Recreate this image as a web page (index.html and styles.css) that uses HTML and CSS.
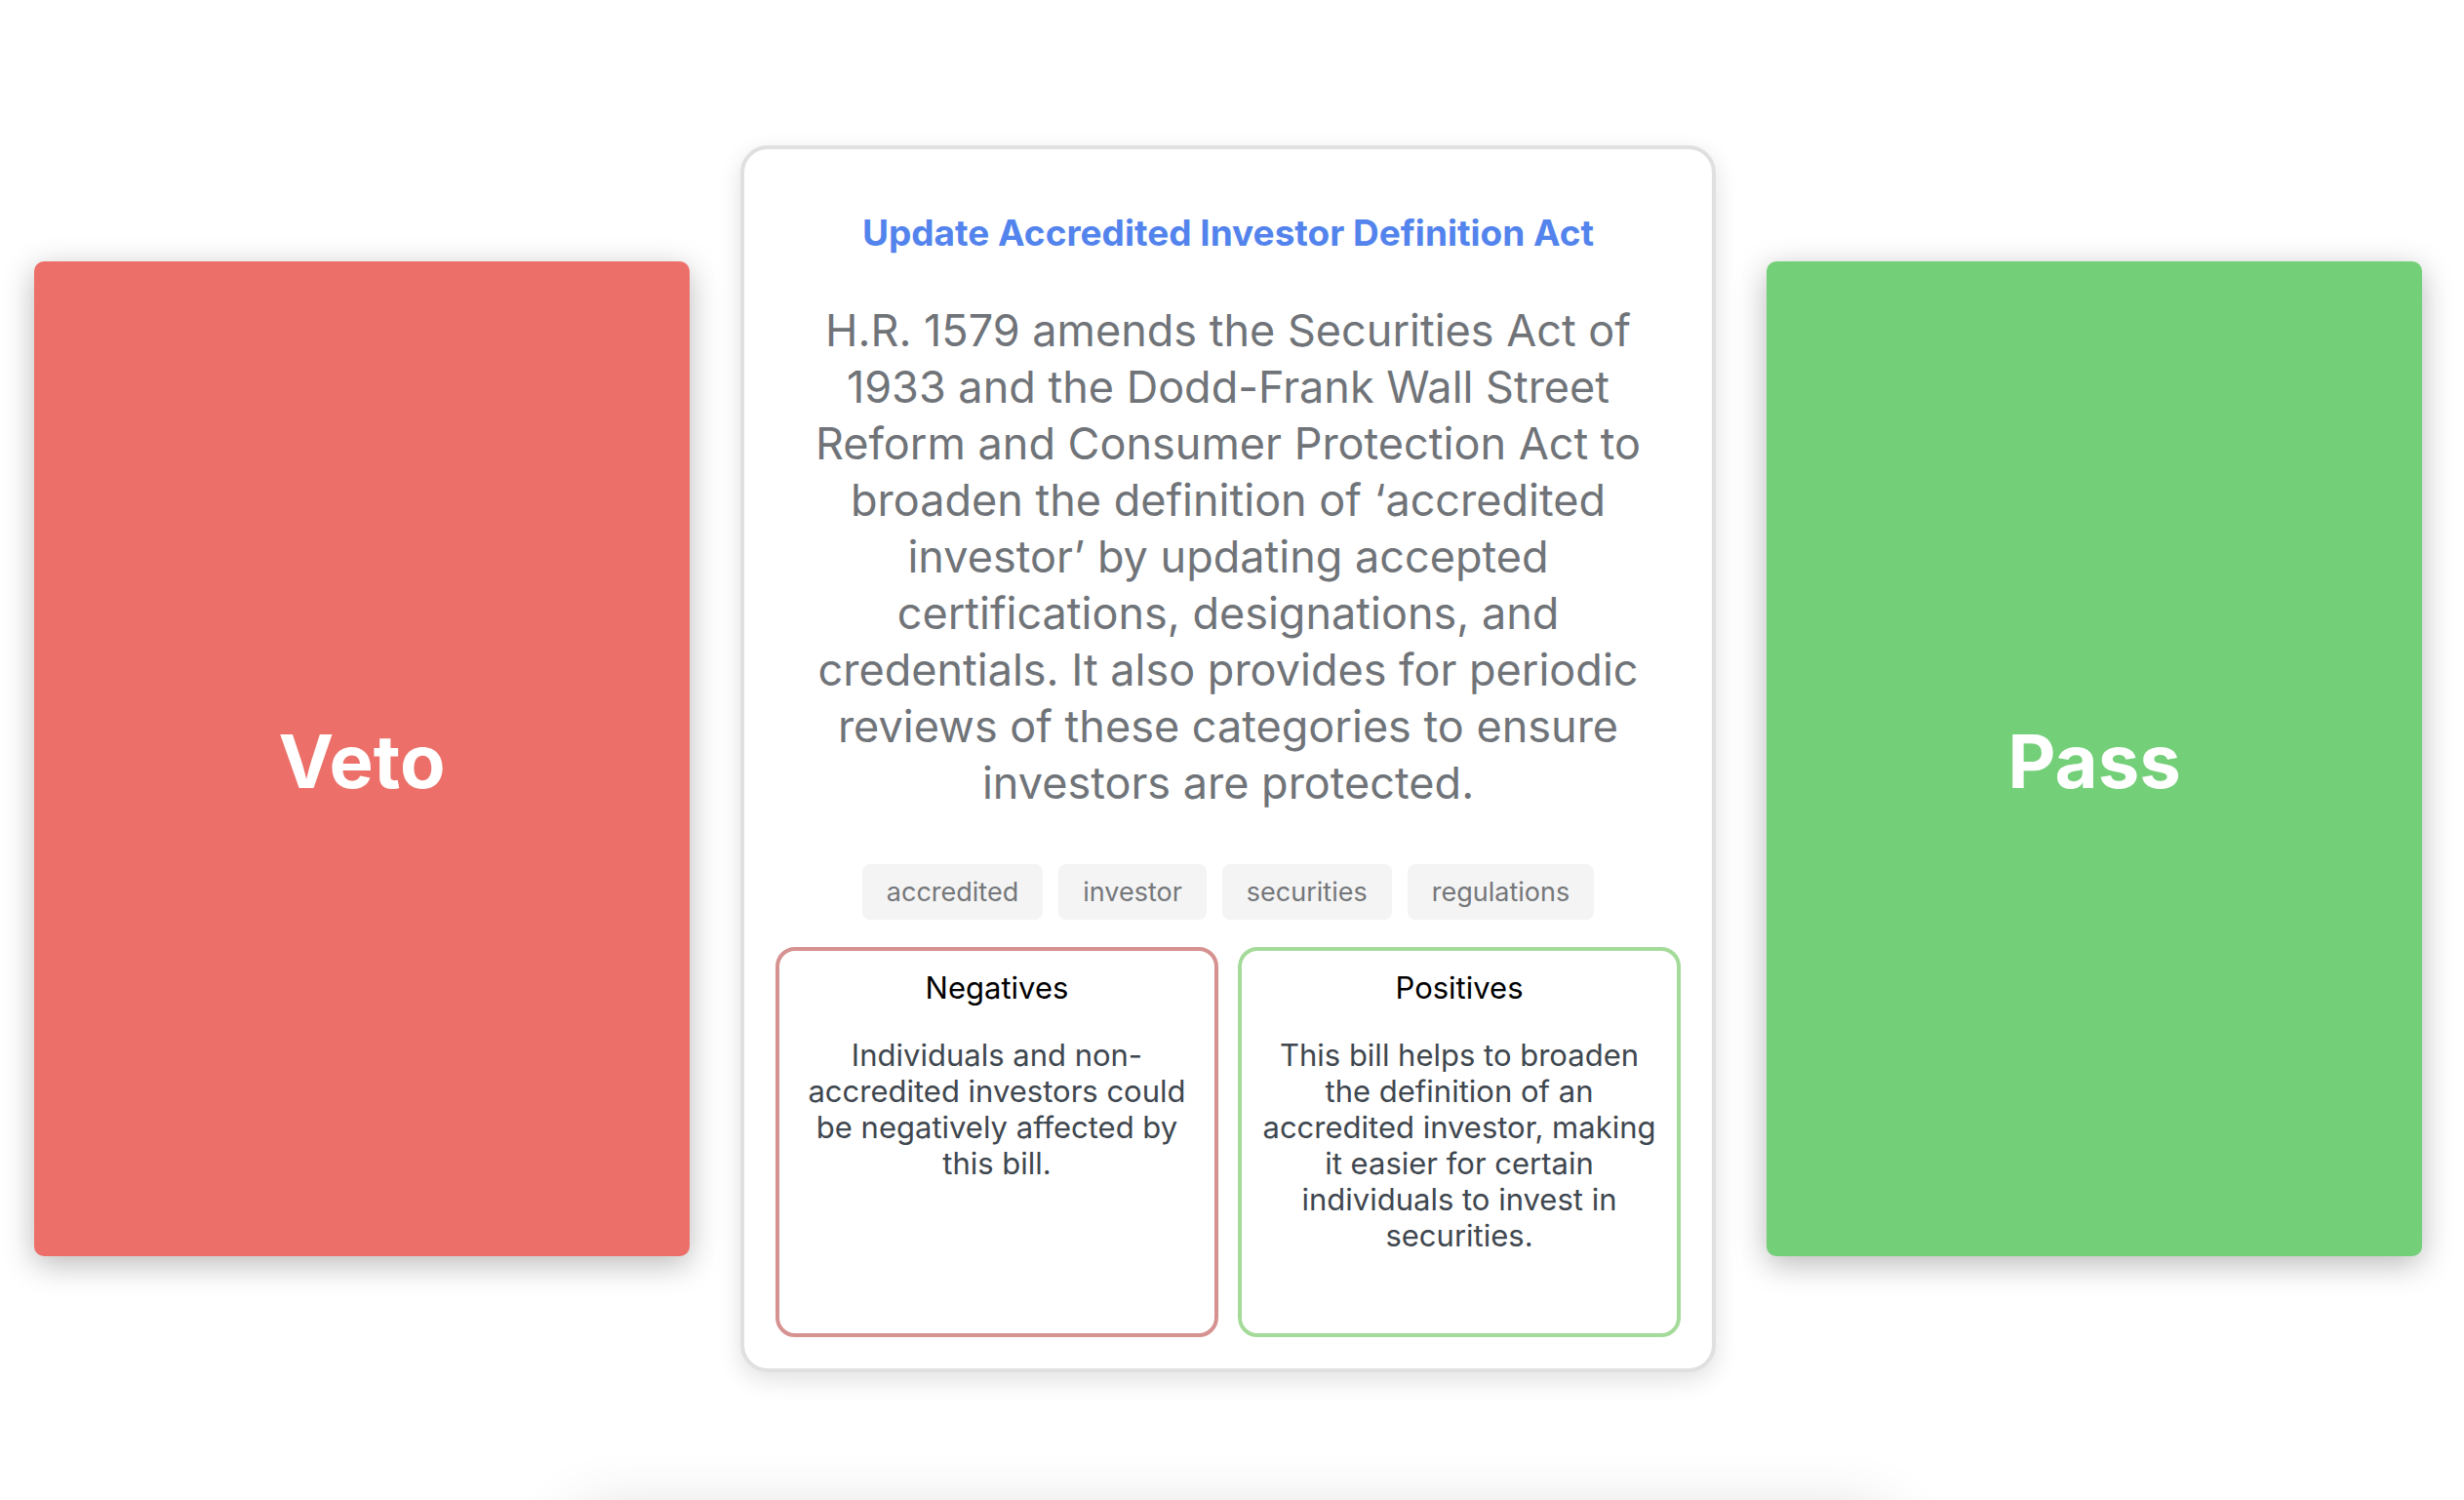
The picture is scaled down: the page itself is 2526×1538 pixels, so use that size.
FILE: index.html
```html
<!DOCTYPE html>
<html lang="en">
<head>
<meta charset="utf-8">
<title>Veto or Pass</title>
<link rel="stylesheet" href="styles.css">
</head>
<body>
<main class="vote">
  <button class="choice choice-veto" type="button">Veto</button>
  <article class="bill">
    <h1 class="bill-title"><a href="#">Update Accredited Investor Definition Act</a></h1>
    <p class="bill-summary">H.R. 1579 amends the Securities Act of<br>1933 and the Dodd-Frank Wall Street<br>Reform and Consumer Protection Act to<br>broaden the definition of ‘accredited<br>investor’ by updating accepted<br>certifications, designations, and<br>credentials. It also provides for periodic<br>reviews of these categories to ensure<br>investors are protected.</p>
    <ul class="tags">
      <li class="tag">accredited</li>
      <li class="tag">investor</li>
      <li class="tag">securities</li>
      <li class="tag">regulations</li>
    </ul>
    <div class="effects">
      <section class="effect effect-negative">
        <h2 class="effect-title">Negatives</h2>
        <p class="effect-text">Individuals and non-<br>accredited investors could<br>be negatively affected by<br>this bill.</p>
      </section>
      <section class="effect effect-positive">
        <h2 class="effect-title">Positives</h2>
        <p class="effect-text">This bill helps to broaden<br>the definition of an<br>accredited investor, making<br>it easier for certain<br>individuals to invest in<br>securities.</p>
      </section>
    </div>
  </article>
  <button class="choice choice-pass" type="button">Pass</button>
</main>
<div class="next-panel"></div>
</body>
</html>
```
FILE: styles.css
```css
* {
  box-sizing: border-box;
}

body {
  height: 100vh;
  margin: 0;
  overflow: hidden;
  background: #fff;
  font-family: Inter, "Liberation Sans", sans-serif;
  text-align: center;
}

h1, h2, p, ul {
  margin: 0;
  padding: 0;
}

.vote {
  display: grid;
  grid-template-columns: minmax(0, 1fr) minmax(0, 1000px) minmax(0, 1fr);
  gap: 52px;
  align-items: center;
  min-height: 100vh;
  padding: 18px 43px 0 35px;
}

.choice {
  min-height: 1020px;
  padding: 4px 0 0;
  border: 0;
  border-radius: 10px;
  box-shadow: 0 8px 32px rgba(0, 0, 0, 0.28);
  color: #fff;
  font-family: inherit;
  font-size: 76px;
  font-weight: 700;
  cursor: pointer;
}

.choice-veto {
  background: #ec7069;
}

.choice-pass {
  background: #73cf78;
}

.bill {
  padding: 62px 32px 32px;
  border: 4px solid #e0e0e0;
  border-radius: 28px;
  background: #fff;
  box-shadow: 0 8px 24px rgba(0, 0, 0, 0.12);
}

.bill-title {
  font-size: 37px;
  font-weight: 700;
  line-height: 48px;
}

.bill-title a {
  color: #5383ec;
  text-decoration: none;
}

.bill-summary {
  padding-top: 47px;
  color: #707479;
  font-size: 45px;
  line-height: 58px;
  white-space: nowrap;
}

.tags {
  display: flex;
  justify-content: center;
  gap: 16px;
  padding: 54px 0 28px;
  list-style: none;
}

.tag {
  padding: 12px 25px;
  border-radius: 8px;
  background: #f4f4f4;
  color: #75777a;
  font-size: 27px;
  line-height: 33px;
}

.effects {
  display: grid;
  grid-template-columns: 1fr 1fr;
  gap: 20px;
}

.effect {
  min-height: 400px;
  padding: 20px 16px;
  border: 4px solid;
  border-radius: 20px;
}

.effect-negative {
  border-color: #d69290;
}

.effect-positive {
  border-color: #a5db9a;
}

.effect-title {
  color: #000;
  font-size: 31px;
  font-weight: 400;
  line-height: 36px;
}

.effect-text {
  padding-top: 32px;
  color: #3f474f;
  font-size: 31px;
  line-height: 37px;
  white-space: nowrap;
}

.next-panel {
  width: 53%;
  height: 400px;
  margin: 0 auto;
  box-shadow: 0 20px 64px rgba(0, 0, 0, 0.19);
}
```
